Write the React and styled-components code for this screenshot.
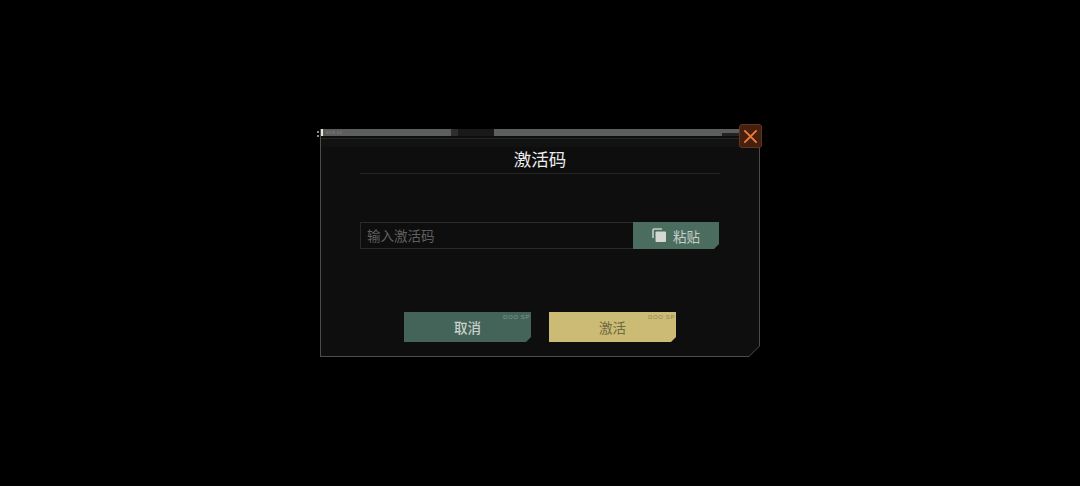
import React from "react"
import styled, { createGlobalStyle } from "styled-components"

const GlobalStyle = createGlobalStyle`
  html, body {
    margin: 0;
    height: 100%;
    background: #000;
  }
  body {
    font-family: "Noto Sans CJK SC", "Noto Sans", sans-serif;
  }
`

const Screen = styled.div`
  width: 1080px;
  height: 486px;
  display: flex;
  justify-content: center;
  padding-top: 129px;
  box-sizing: border-box;
  overflow: hidden;
`

const Dialog = styled.div`
  position: relative;
  width: 440px;
  height: 228px;
`

const Frame = styled.div`
  height: 100%;
  box-sizing: border-box;
  padding: 0 1px 1px;
  background: #4c4c4c;
  clip-path: polygon(0 0, 100% 0, 100% calc(100% - 11px), calc(100% - 11px) 100%, 0 100%);
`

const Body = styled.div`
  height: 100%;
  display: flex;
  flex-direction: column;
  background: #0e0e0e;
  clip-path: polygon(0 0, 100% 0, 100% calc(100% - 10px), calc(100% - 10px) 100%, 0 100%);
`

const TopBar = styled.div`
  display: flex;
  height: 7px;
  flex-shrink: 0;
  margin: 0 -1px;
  background: #5c5d5d;
`

const BarFill = styled.div`
  flex: ${p => p.$grow || "none"};
  width: ${p => p.$width || "auto"};
  background: ${p => p.$color || "#5c5d5d"};
`

const BarCap = styled(BarFill)`
  width: 3px;
  background: #e9e6d8;
`

const BarEnd = styled(BarFill)`
  width: 38px;
  background: linear-gradient(#5c5d5d 0 4px, #232323 4px);
`

const SubBar = styled.div`
  height: 8px;
  flex-shrink: 0;
  margin-top: 2px;
  border-top: 1px solid #262626;
  background: #121212;
`

const Content = styled.div`
  flex: 1;
  display: flex;
  flex-direction: column;
  padding: 0 39px;
`

const Title = styled.h1`
  margin: 0;
  height: 27px;
  box-sizing: border-box;
  border-bottom: 1px solid #252525;
  color: #ececec;
  font-size: 17.5px;
  font-weight: 400;
  line-height: 24px;
  text-align: center;
`

const CodeRow = styled.div`
  display: flex;
  height: 27px;
  margin: 48px 1px 0 0;
`

const CodeInput = styled.div`
  flex: 1;
  box-sizing: border-box;
  padding-left: 6px;
  border: 1px solid #2a2a2a;
  border-right: 0;
  color: #5f5f5f;
  font-size: 13.5px;
  line-height: 25px;
`

const PasteButton = styled.div`
  width: 86px;
  display: flex;
  align-items: center;
  justify-content: center;
  gap: 6px;
  box-sizing: border-box;
  background: #4b6d5f;
  color: #c6cec8;
  font-size: 13.5px;
  clip-path: polygon(0 0, 100% 0, 100% calc(100% - 5px), calc(100% - 5px) 100%, 0 100%);
`

const Actions = styled.div`
  display: flex;
  justify-content: center;
  gap: 18px;
  margin-top: 63px;
`

const ActionButton = styled.div`
  position: relative;
  width: 127px;
  height: 30px;
  display: flex;
  align-items: center;
  justify-content: center;
  font-size: 13.5px;
  font-weight: ${p => (p.$primary ? 400 : 500)};
  background: ${p => (p.$primary ? "#cbbb75" : "#44645a")};
  color: ${p => (p.$primary ? "#6f6a3f" : "#cbd2cc")};
  clip-path: polygon(0 0, 100% 0, 100% calc(100% - 5px), calc(100% - 5px) 100%, 0 100%);
`

const ButtonTag = styled.span`
  position: absolute;
  top: 2px;
  right: 1px;
  font-family: "Liberation Sans", sans-serif;
  font-size: 6px;
  line-height: 6px;
  letter-spacing: 0.6px;
  color: ${p => (p.$primary ? "#8f8658" : "#7f9a8f")};
`

const CloseButton = styled.div`
  position: absolute;
  top: -5px;
  right: -2px;
  width: 23px;
  height: 24px;
  box-sizing: border-box;
  display: flex;
  align-items: center;
  justify-content: center;
  border: 1px solid #5f3423;
  border-radius: 3px;
  background: #46200f;
`

const BarNote = styled.span`
  position: absolute;
  top: 1px;
  left: 6px;
  font-family: "Liberation Sans", sans-serif;
  font-size: 4px;
  line-height: 5px;
  color: #8a8a8a;
  letter-spacing: 0.5px;
`

const SideDots = styled.div`
  position: absolute;
  top: 2px;
  left: -3px;
  display: flex;
  flex-direction: column;
  gap: 2px;
`

const SideDot = styled.span`
  width: 2px;
  height: 2px;
  background: #8a8a8a;
`

const CopyIcon = () => (
  <svg width="15" height="15" viewBox="0 0 15 15" aria-hidden="true">
    <path d="M1 10V2a1 1 0 0 1 1-1h8" fill="none" stroke="#c6cec8" strokeWidth="1.6" />
    <rect x="3.5" y="3.5" width="10.5" height="10.5" rx="1" fill="#d3d8d3" />
  </svg>
)

const CrossIcon = () => (
  <svg width="15" height="15" viewBox="0 0 16 16" aria-hidden="true">
    <path d="M2 2 14 14M14 2 2 14" stroke="#ee7a3c" strokeWidth="2" strokeLinecap="round" />
  </svg>
)

const App = () => {
  return (
    <Screen>
      <GlobalStyle />
      <Dialog>
        <Frame>
          <Body>
            <TopBar>
              <BarCap />
              <BarFill $grow="1" />
              <BarFill $width="7px" $color="#2e2e2e" />
              <BarFill $width="36px" $color="#191919" />
              <BarFill $width="228px" />
              <BarEnd />
            </TopBar>
            <SubBar />
            <Content>
              <Title>激活码</Title>
              <CodeRow>
                <CodeInput>输入激活码</CodeInput>
                <PasteButton>
                  <CopyIcon />
                  粘贴
                </PasteButton>
              </CodeRow>
              <Actions>
                <ActionButton>
                  <ButtonTag>DOO SP</ButtonTag>
                  取消
                </ActionButton>
                <ActionButton $primary>
                  <ButtonTag $primary>DOO SP</ButtonTag>
                  激活
                </ActionButton>
              </Actions>
            </Content>
          </Body>
        </Frame>
        <SideDots>
          <SideDot />
          <SideDot />
        </SideDots>
        <BarNote>SYS 01</BarNote>
        <CloseButton>
          <CrossIcon />
        </CloseButton>
      </Dialog>
    </Screen>
  )
}

export default App
